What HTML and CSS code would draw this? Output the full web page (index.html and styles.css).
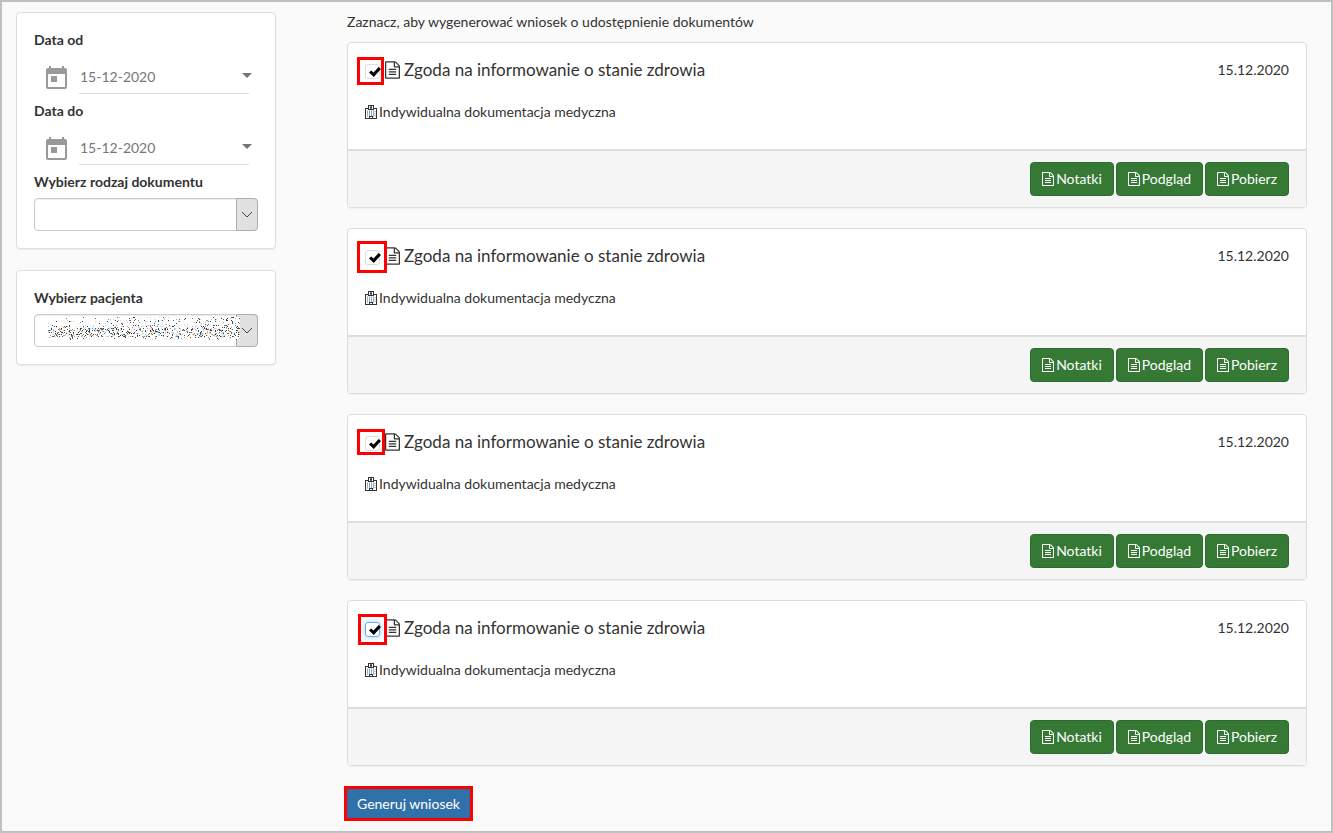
FILE: index.html
```html
<!DOCTYPE html>
<html lang="pl">
<head>
  <meta charset="UTF-8">
  <meta name="viewport" content="width=device-width, initial-scale=1.0">
  <title>Dokumenty pacjenta</title>
  <link rel="stylesheet" href="styles.css">
</head>
<body>
  <svg class="sprite" aria-hidden="true">
    <symbol id="icon-file" viewBox="0 0 1536 1792">
      <path d="M1468 380q28 28 48 76t20 88v1152q0 40-28 68t-68 28h-1344q-40 0-68-28t-28-68v-1600q0-40 28-68t68-28h896q40 0 88 20t76 48zm-444-244v376h376q-10-29-22-41l-313-313q-12-12-41-22zm384 1528v-1024h-416q-40 0-68-28t-28-68v-416h-768v1536h1280zm-1024-864q0-14 9-23t23-9h704q14 0 23 9t9 23v64q0 14-9 23t-23 9h-704q-14 0-23-9t-9-23v-64zm736 224q14 0 23 9t9 23v64q0 14-9 23t-23 9h-704q-14 0-23-9t-9-23v-64q0-14 9-23t23-9h704zm0 256q14 0 23 9t9 23v64q0 14-9 23t-23 9h-704q-14 0-23-9t-9-23v-64q0-14 9-23t23-9h704z"/>
    </symbol>
    <symbol id="icon-hospital" viewBox="0 0 12 14">
      <path fill-rule="evenodd" d="M3 0h6v3h3v11H0V3h3zM4 1v3h4V1zM1 4v9h10V4H9v1H3V4z"/>
      <path d="M5 1h.7v1h.6V1H7v3h-.7V3h-.6v1H5z"/>
      <path class="windows" d="M2 6h8v1H2zM2 8h8v1H2zM2 10h8v1H2z"/>
      <path d="M4 11h4v2H7v-1H5v1H4z"/>
    </symbol>
    <symbol id="icon-calendar" viewBox="0 0 21 23">
      <path fill-rule="evenodd" d="M3 0h2v2h11V0h2v2h1a2 2 0 0 1 2 2v17a2 2 0 0 1-2 2H2a2 2 0 0 1-2-2V4a2 2 0 0 1 2-2h1zM2 8v13h17V8z"/>
      <path d="M5 10h6v6H5z"/>
    </symbol>
  </svg>

  <div class="page">
    <aside class="sidebar">
      <form class="panel filters">
        <label for="date-from">Data od</label>
        <div class="date-field">
          <svg class="icon-calendar"><use href="#icon-calendar"/></svg>
          <input id="date-from" type="text" value="15-12-2020">
        </div>
        <label for="date-to">Data do</label>
        <div class="date-field">
          <svg class="icon-calendar"><use href="#icon-calendar"/></svg>
          <input id="date-to" type="text" value="15-12-2020">
        </div>
        <label for="doc-type">Wybierz rodzaj dokumentu</label>
        <div class="select">
          <select id="doc-type"><option></option></select>
          <svg class="arrow" viewBox="0 0 20 31"><path d="M5 13l5 5 5-5"/></svg>
        </div>
      </form>
      <form class="panel filters">
        <label for="patient">Wybierz pacjenta</label>
        <div class="select">
          <select id="patient"><option></option></select>
          <svg class="arrow" viewBox="0 0 20 31"><path d="M5 13l5 5 5-5"/></svg>
          <canvas class="redacted" id="redacted" width="192" height="23"></canvas>
        </div>
      </form>
    </aside>

    <main class="documents">
      <p class="hint">Zaznacz, aby wygenerować wniosek o udostępnienie dokumentów</p>

      <article class="panel document">
        <div class="document-body">
          <div class="document-head">
            <input type="checkbox" id="doc-1" checked>
            <label for="doc-1"><svg class="icon-title"><use href="#icon-file"/></svg>Zgoda na informowanie o stanie zdrowia</label>
            <time datetime="2020-12-15">15.12.2020</time>
          </div>
          <p class="category"><svg class="icon-hospital"><use href="#icon-hospital"/></svg>Indywidualna dokumentacja medyczna</p>
          <span class="mark mark-1"></span>
        </div>
        <div class="document-footer">
          <button type="button" class="btn"><svg class="icon-btn"><use href="#icon-file"/></svg>Notatki</button>
          <button type="button" class="btn"><svg class="icon-btn"><use href="#icon-file"/></svg>Podgląd</button>
          <button type="button" class="btn"><svg class="icon-btn"><use href="#icon-file"/></svg>Pobierz</button>
        </div>
      </article>

      <article class="panel document">
        <div class="document-body">
          <div class="document-head">
            <input type="checkbox" id="doc-2" checked>
            <label for="doc-2"><svg class="icon-title"><use href="#icon-file"/></svg>Zgoda na informowanie o stanie zdrowia</label>
            <time datetime="2020-12-15">15.12.2020</time>
          </div>
          <p class="category"><svg class="icon-hospital"><use href="#icon-hospital"/></svg>Indywidualna dokumentacja medyczna</p>
          <span class="mark mark-2"></span>
        </div>
        <div class="document-footer">
          <button type="button" class="btn"><svg class="icon-btn"><use href="#icon-file"/></svg>Notatki</button>
          <button type="button" class="btn"><svg class="icon-btn"><use href="#icon-file"/></svg>Podgląd</button>
          <button type="button" class="btn"><svg class="icon-btn"><use href="#icon-file"/></svg>Pobierz</button>
        </div>
      </article>

      <article class="panel document">
        <div class="document-body">
          <div class="document-head">
            <input type="checkbox" id="doc-3" checked>
            <label for="doc-3"><svg class="icon-title"><use href="#icon-file"/></svg>Zgoda na informowanie o stanie zdrowia</label>
            <time datetime="2020-12-15">15.12.2020</time>
          </div>
          <p class="category"><svg class="icon-hospital"><use href="#icon-hospital"/></svg>Indywidualna dokumentacja medyczna</p>
          <span class="mark mark-3"></span>
        </div>
        <div class="document-footer">
          <button type="button" class="btn"><svg class="icon-btn"><use href="#icon-file"/></svg>Notatki</button>
          <button type="button" class="btn"><svg class="icon-btn"><use href="#icon-file"/></svg>Podgląd</button>
          <button type="button" class="btn"><svg class="icon-btn"><use href="#icon-file"/></svg>Pobierz</button>
        </div>
      </article>

      <article class="panel document">
        <div class="document-body">
          <div class="document-head">
            <input type="checkbox" id="doc-4" class="focused" checked>
            <label for="doc-4"><svg class="icon-title"><use href="#icon-file"/></svg>Zgoda na informowanie o stanie zdrowia</label>
            <time datetime="2020-12-15">15.12.2020</time>
          </div>
          <p class="category"><svg class="icon-hospital"><use href="#icon-hospital"/></svg>Indywidualna dokumentacja medyczna</p>
          <span class="mark mark-4"></span>
        </div>
        <div class="document-footer">
          <button type="button" class="btn"><svg class="icon-btn"><use href="#icon-file"/></svg>Notatki</button>
          <button type="button" class="btn"><svg class="icon-btn"><use href="#icon-file"/></svg>Podgląd</button>
          <button type="button" class="btn"><svg class="icon-btn"><use href="#icon-file"/></svg>Pobierz</button>
        </div>
      </article>

      <button type="button" class="generate">Generuj wniosek</button>
    </main>
  </div>

<script>
  // speckles that hide the patient's name
  const canvas = document.getElementById("redacted");
  const ctx = canvas.getContext("2d");
  const colors = ["#333", "#456", "#347", "#754", "#58c", "#c96", "#9df", "#fd9", "#adf", "#eca"];
  let seed = 7;

  function random() {
    seed = (seed * 16807) % 2147483647;
    return seed / 2147483647;
  }

  for (let y = 0; y < canvas.height; y++) {
    const density = y < 8 ? 0.1 : y < 11 ? 0.2 : y < 20 ? 0.36 : 0.12;
    for (let x = 0; x < canvas.width; x++) {
      if (y < 9 && x < 30 && random() < 0.6) continue;
      if (random() < density) {
        ctx.fillStyle = colors[Math.floor(random() * colors.length)];
        ctx.fillRect(x, y, 1, 1);
      }
    }
  }
</script>
</body>
</html>
```
FILE: styles.css
```css
* {
  box-sizing: border-box;
}
body {
  margin: 0;
  background-color: #fafafa;
  color: #333;
  font-family: Lato, sans-serif;
  font-size: 14px;
  line-height: 20px;
}
p {
  margin: 0;
}
svg {
  fill: currentColor;
  flex: none;
}
.sprite {
  display: none;
}
.page {
  display: flex;
  gap: 71px;
  min-height: 100vh;
  padding: 10px 24px 10px 14px;
  border: 2px solid #c0c0c0;
}
.panel {
  background-color: #fff;
  border: 1px solid #ddd;
  border-radius: 4px;
  box-shadow: 0 1px 1px rgba(0, 0, 0, 0.05);
}

/* filters */
.sidebar {
  flex: none;
  width: 260px;
}
.filters {
  margin-bottom: 21px;
  padding: 17px;
}
.filters label {
  display: block;
  font-weight: bold;
}
.date-field {
  position: relative;
  display: flex;
  gap: 12px;
  height: 43px;
  margin: 0 9px 8px 12px;
  color: #999;
}
.icon-calendar {
  width: 21px;
  height: 23px;
  margin-top: 16px;
}
.date-field input {
  flex: 1;
  min-width: 0;
  height: 34px;
  margin-top: 10px;
  padding: 0 1px;
  border: none;
  border-bottom: 1px solid #ddd;
  background: none;
  color: #777;
  font: inherit;
}
.date-field::after {
  content: "";
  position: absolute;
  top: 23px;
  right: -3px;
  border: 5px solid transparent;
  border-top-color: #757575;
  border-bottom: none;
}
.select {
  position: relative;
  margin-top: 6px;
}
.select select {
  display: block;
  width: 100%;
  height: 33px;
  border: 1px solid #ccc;
  border-radius: 4px;
  background-color: #fff;
  box-shadow: inset 0 1px 1px rgba(0, 0, 0, 0.08);
  appearance: none;
}
.arrow {
  position: absolute;
  top: 0;
  right: 0;
  width: 22px;
  height: 33px;
  border: 1px solid #adadad;
  border-radius: 0 4px 4px 0;
  background-color: #e1e1e1;
  fill: none;
  stroke: #444;
  pointer-events: none;
}
.redacted {
  position: absolute;
  top: 3px;
  left: 14px;
  background-color: #fff;
  pointer-events: none;
}

/* documents */
.documents {
  flex: 1;
}
.hint {
  margin-bottom: 10px;
}
.document {
  margin-bottom: 20px;
}
.document-body {
  position: relative;
  height: 106px;
  padding: 17px;
}
.document-head {
  display: flex;
  align-items: center;
}
.document-head input {
  appearance: none;
  position: relative;
  width: 15px;
  height: 15px;
  margin: 3px 5px 0 0;
  border: 1px solid #ddd;
  border-radius: 3px;
}
.document-head input:checked::before {
  content: "";
  position: absolute;
  top: 2px;
  left: 3px;
  width: 12px;
  height: 10px;
  background-color: #000;
  clip-path: polygon(0 54%, 18% 34%, 38% 54%, 80% 0, 100% 20%, 40% 100%);
}
.document-head input.focused {
  border-color: #66afe9;
  box-shadow: 0 0 6px rgba(102, 175, 233, 0.6);
}
.document-head label {
  display: flex;
  align-items: center;
  gap: 4px;
  font-size: 17px;
}
.document-head time {
  margin-left: auto;
}
.icon-title {
  width: 15px;
  height: 18px;
}
.category {
  display: flex;
  align-items: center;
  gap: 2px;
  margin-top: 22px;
}
.icon-hospital {
  width: 12px;
  height: 14px;
}
.windows {
  fill: none;
  stroke: #6a93b8;
  stroke-dasharray: 1 1;
}
.document-footer {
  display: flex;
  justify-content: flex-end;
  gap: 2px;
  padding: 11px 17px;
  border-top: 2px solid #ddd;
  background-color: #f5f5f5;
}
.btn {
  display: flex;
  align-items: center;
  gap: 2px;
  height: 34px;
  padding: 0 11px;
  border: 1px solid #2d6a2f;
  border-radius: 4px;
  background-color: #357935;
  color: #fff;
  font: inherit;
  cursor: pointer;
}
.icon-btn {
  width: 12px;
  height: 14px;
}
.generate {
  height: 29px;
  margin: 3px 0 0;
  padding: 0 9px;
  border: 1px solid #2e6da4;
  outline: 3px solid #f00;
  background-color: #3071a9;
  color: #fff;
  font: inherit;
  cursor: pointer;
}

/* red frames round the checkboxes */
.mark {
  position: absolute;
  border: 3px solid #f00;
  pointer-events: none;
}
.mark-1 {
  top: 14px;
  left: 9px;
  width: 27px;
  height: 28px;
}
.mark-2 {
  top: 12px;
  left: 9px;
  width: 30px;
  height: 32px;
}
.mark-3 {
  top: 14px;
  left: 9px;
  width: 28px;
  height: 26px;
}
.mark-4 {
  top: 13px;
  left: 10px;
  width: 29px;
  height: 31px;
}
```
